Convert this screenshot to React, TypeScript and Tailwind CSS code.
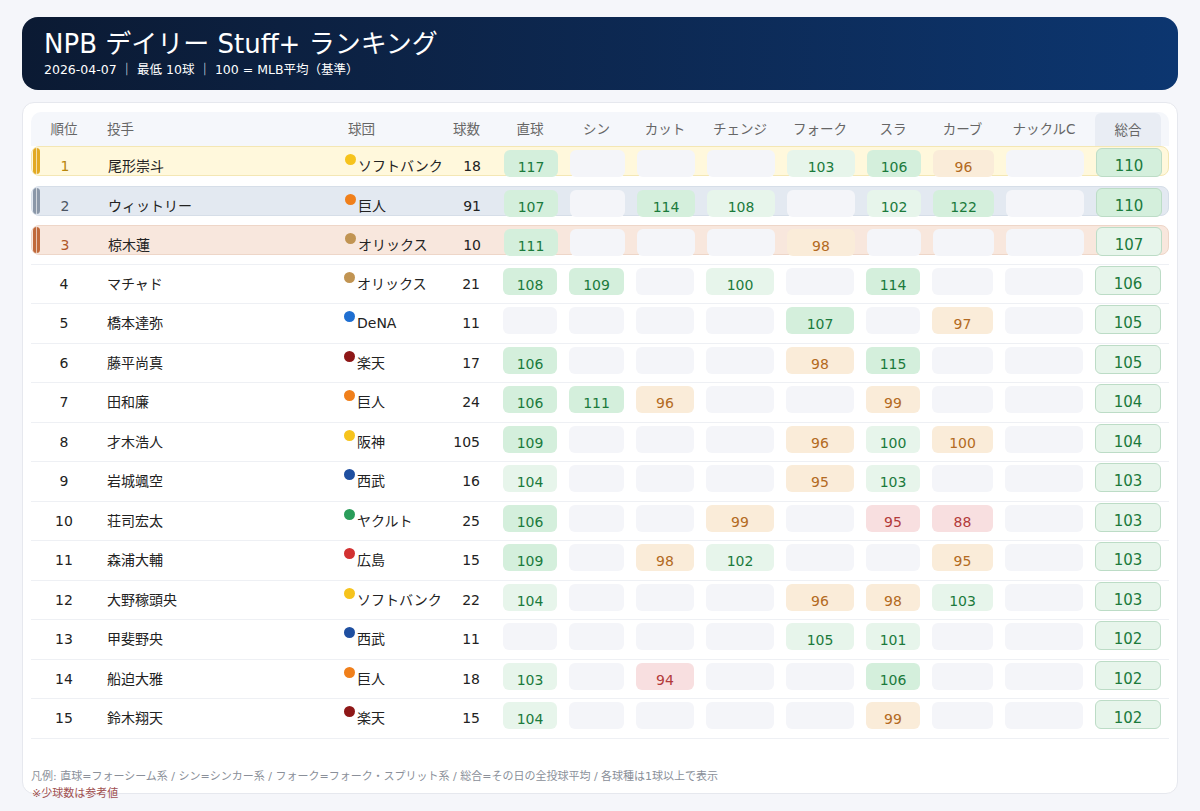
type Kind = 'D' | 'L' | 'O' | 'R'
type Cell = [number, Kind] | null

interface Row {
  name: string
  team: string
  count: number
  cells: Cell[]
  total: number
}

const TEAM_COLORS: Record<string, string> = {
  ソフトバンク: 'bg-[#f6c31c]',
  巨人: 'bg-[#f07f1a]',
  オリックス: 'bg-[#c19452]',
  DeNA: 'bg-[#1f6fd1]',
  楽天: 'bg-[#8e1717]',
  阪神: 'bg-[#f6c31c]',
  西武: 'bg-[#1f4fa0]',
  ヤクルト: 'bg-[#2a9d5a]',
  広島: 'bg-[#d23131]',
}

const COLS = [
  { label: '直球', w: 'w-[54px]' },
  { label: 'シン', w: 'w-[55px]' },
  { label: 'カット', w: 'w-[58px]' },
  { label: 'チェンジ', w: 'w-[68px]' },
  { label: 'フォーク', w: 'w-[68px]' },
  { label: 'スラ', w: 'w-[54px]' },
  { label: 'カーブ', w: 'w-[61px]' },
  { label: 'ナックルC', w: 'w-[78px]' },
]

const _ = null
const ROWS: Row[] = [
  { name: '尾形崇斗', team: 'ソフトバンク', count: 18, cells: [[117, 'D'], _, _, _, [103, 'L'], [106, 'D'], [96, 'O'], _], total: 110 },
  { name: 'ウィットリー', team: '巨人', count: 91, cells: [[107, 'D'], _, [114, 'D'], [108, 'L'], _, [102, 'L'], [122, 'D'], _], total: 110 },
  { name: '椋木蓮', team: 'オリックス', count: 10, cells: [[111, 'D'], _, _, _, [98, 'O'], _, _, _], total: 107 },
  { name: 'マチャド', team: 'オリックス', count: 21, cells: [[108, 'D'], [109, 'D'], _, [100, 'L'], _, [114, 'D'], _, _], total: 106 },
  { name: '橋本達弥', team: 'DeNA', count: 11, cells: [_, _, _, _, [107, 'D'], _, [97, 'O'], _], total: 105 },
  { name: '藤平尚真', team: '楽天', count: 17, cells: [[106, 'D'], _, _, _, [98, 'O'], [115, 'D'], _, _], total: 105 },
  { name: '田和廉', team: '巨人', count: 24, cells: [[106, 'D'], [111, 'D'], [96, 'O'], _, _, [99, 'O'], _, _], total: 104 },
  { name: '才木浩人', team: '阪神', count: 105, cells: [[109, 'D'], _, _, _, [96, 'O'], [100, 'L'], [100, 'O'], _], total: 104 },
  { name: '岩城颯空', team: '西武', count: 16, cells: [[104, 'L'], _, _, _, [95, 'O'], [103, 'L'], _, _], total: 103 },
  { name: '荘司宏太', team: 'ヤクルト', count: 25, cells: [[106, 'D'], _, _, [99, 'O'], _, [95, 'R'], [88, 'R'], _], total: 103 },
  { name: '森浦大輔', team: '広島', count: 15, cells: [[109, 'D'], _, [98, 'O'], [102, 'L'], _, _, [95, 'O'], _], total: 103 },
  { name: '大野稼頭央', team: 'ソフトバンク', count: 22, cells: [[104, 'L'], _, _, _, [96, 'O'], [98, 'O'], [103, 'L'], _], total: 103 },
  { name: '甲斐野央', team: '西武', count: 11, cells: [_, _, _, _, [105, 'L'], [101, 'L'], _, _], total: 102 },
  { name: '船迫大雅', team: '巨人', count: 18, cells: [[103, 'L'], _, [94, 'R'], _, _, [106, 'D'], _, _], total: 102 },
  { name: '鈴木翔天', team: '楽天', count: 15, cells: [[104, 'L'], _, _, _, _, [99, 'O'], _, _], total: 102 },
]

const KIND_CLASS: Record<Kind, string> = {
  D: 'bg-[#d4efdc] text-[#1b7a3c]',
  L: 'bg-[#e7f5eb] text-[#1b7a3c]',
  O: 'bg-[#faecd9] text-[#b36a22]',
  R: 'bg-[#f8dfe0] text-[#b33a3a]',
}

const PODIUM = [
  { band: 'bg-[#fff8dc] border-[#f4e7b4]', bar: 'bg-[#e2a922]', rank: 'text-[#b8860b]' },
  { band: 'bg-[#e3e9f1] border-[#d6dee8]', bar: 'bg-[#8a97a8]', rank: 'text-[#4b5563]' },
  { band: 'bg-[#f8e7dd] border-[#eed6c8]', bar: 'bg-[#c0693a]', rank: 'text-[#b0582a]' },
]

function ScoreCell({ cell, w }: { cell: Cell; w: string }) {
  return (
    <div
      className={`${w} mt-[3px] h-[27px] shrink-0 rounded-md flex items-end justify-center leading-[20px] ${
        cell ? KIND_CLASS[cell[1]] : 'bg-[#f4f5f9]'
      }`}
    >
      {cell ? cell[0] : ''}
    </div>
  )
}

export default function App() {
  return (
    <div
      className="min-h-[811px] w-[1200px] bg-[#f5f6fa] pt-[17px] px-[22px] text-[14px] text-[#222]"
      style={{ fontFamily: '"DejaVu Sans", "Noto Sans CJK JP", sans-serif' }}
    >
      {/* Banner */}
      <div className="h-[73px] rounded-[16px] bg-gradient-to-r from-[#0b1a33] to-[#0c3670] px-[22px] pt-[10px] text-white">
        <div className="text-[26px] leading-[34px]">NPB デイリー Stuff+ ランキング</div>
        <div className="text-[12.5px] leading-[18px]">2026-04-07 ｜ 最低 10球 ｜ 100 = MLB平均（基準）</div>
      </div>

      {/* Table card */}
      <div className="mt-[12px] h-[692px] rounded-[12px] border border-[#e6e8ee] bg-white px-[8px] pt-[9px]">
        {/* Header */}
        <div className="flex h-[34px] items-center gap-[12px] rounded-t-[10px] bg-[#f5f7fb] text-[#666] text-[13.5px]">
          <div className="w-[66px] shrink-0 text-center">順位</div>
          <div className="w-[235px] shrink-0 -ml-[12px] pl-[10px]">投手</div>
          <div className="w-[86px] shrink-0 pl-[4px]">球団</div>
          <div className="w-[38px] shrink-0 text-right">球数</div>
          <div className="w-[11px] shrink-0 -ml-[12px]" />
          {COLS.map((c) => (
            <div key={c.label} className={`${c.w} shrink-0 text-center whitespace-nowrap`}>
              {c.label}
            </div>
          ))}
          <div className="w-[66px] h-[34px] mt-[2px] shrink-0 rounded-t-md bg-[#e9edf4] flex items-center justify-center">総合</div>
        </div>

        {ROWS.map((r, i) => {
          const pod = PODIUM[i]
          return (
            <div key={r.name} className={`h-[39.5px] ${i >= 2 ? 'border-b border-[#eef0f4]' : ''}`}>
              <div
                className={`relative flex h-[30px] items-start gap-[12px] ${
                  pod ? `${pod.band} rounded-[8px] border` : ''
                }`}
              >
                {pod && (
                  <div className={`absolute left-[1px] top-[1px] h-[26px] w-[7px] rounded-full ${pod.bar} flex justify-center`}>
                    <div className="w-[1px] h-full bg-white/60" />
                  </div>
                )}
                <div className={`w-[66px] shrink-0 text-center leading-[20px] mt-[9px] ${pod ? pod.rank : ''}`}>{i + 1}</div>
                <div className="w-[235px] shrink-0 -ml-[12px] pl-[10px] leading-[20px] mt-[9px]">{r.name}</div>
                <div className="w-[86px] shrink-0 flex items-start leading-[20px] mt-[9px] whitespace-nowrap">
                  <span className={`mt-[-2px] mr-[2px] h-[11px] w-[11px] shrink-0 rounded-full ${TEAM_COLORS[r.team]}`} />
                  {r.team}
                </div>
                <div className="w-[38px] shrink-0 text-right leading-[20px] mt-[9px]">{r.count}</div>
                <div className="w-[11px] shrink-0 -ml-[12px]" />
                {r.cells.map((c, j) => (
                  <ScoreCell key={j} cell={c} w={COLS[j].w} />
                ))}
                <div
                  className={`w-[66px] mt-[1px] h-[29px] shrink-0 rounded-md border border-[#bcdcc6] flex items-end justify-center text-[15px] leading-[20px] text-[#1b7a3c] ${
                    r.total >= 110 ? 'bg-[#d4efdc]' : 'bg-[#e7f5eb]'
                  }`}
                >
                  {r.total}
                </div>
              </div>
            </div>
          )
        })}

        <div className="mt-[30px] text-[11px] leading-[16px] text-[#8a8f99] whitespace-nowrap">
          凡例: 直球=フォーシーム系 / シン=シンカー系 / フォーク=フォーク・スプリット系 / 総合=その日の全投球平均 / 各球種は1球以上で表示
        </div>
      </div>
      <div className="-mt-[8px] pl-[10px] text-[11px] leading-[16px] text-[#a05050]">※少球数は参考値</div>
    </div>
  )
}
